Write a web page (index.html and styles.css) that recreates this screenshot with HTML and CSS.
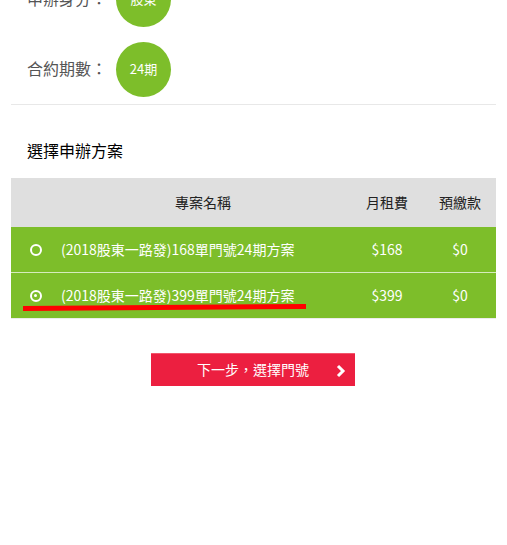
FILE: index.html
```html
<!DOCTYPE html>
<html lang="zh-Hant">
<head>
    <meta charset="UTF-8">
    <meta name="viewport" content="width=device-width, initial-scale=1.0">
    <title>選擇申辦方案</title>
    <link rel="stylesheet" href="styles.css">
</head>
<body>
    <div class="page">
        <!-- 申辦資訊 -->
        <div class="info">
            <div class="info-row">
                <span class="info-label">申辦身分：</span>
                <span class="badge">股東</span>
            </div>
            <div class="info-row">
                <span class="info-label">合約期數：</span>
                <span class="badge">24期</span>
            </div>
        </div>
        <hr class="divider">

        <h2 class="section-title">選擇申辦方案</h2>

        <div class="plans">
            <div class="plan-head">
                <span class="col-radio"></span>
                <span class="col-name">專案名稱</span>
                <span class="col-price">月租費</span>
                <span class="col-deposit">預繳款</span>
            </div>
            <label class="plan-row">
                <span class="col-radio"><span class="radio"></span></span>
                <span class="col-name name-left">(2018股東一路發)168單門號24期方案</span>
                <span class="col-price">$168</span>
                <span class="col-deposit">$0</span>
            </label>
            <label class="plan-row">
                <span class="col-radio"><span class="radio checked"></span></span>
                <span class="col-name name-left">(2018股東一路發)399單門號24期方案</span>
                <span class="col-price">$399</span>
                <span class="col-deposit">$0</span>
            </label>
            <!-- 標記線 -->
            <svg class="mark" width="290" height="10" viewBox="0 0 290 10">
                <polygon points="0,3 283,1 283,6 0,8" fill="#ff0000"/>
            </svg>
        </div>

        <div class="actions">
            <button class="next-btn" type="button">
                下一步，選擇門號
                <svg class="chev" width="12" height="14" viewBox="0 0 12 14">
                    <polyline points="3,2 8,7 3,12" fill="none" stroke="#fff" stroke-width="3"/>
                </svg>
            </button>
        </div>
    </div>
</body>
</html>
```

FILE: styles.css
```css
body {
    margin: 0;
    font-family: "Noto Sans CJK TC", "Liberation Sans", sans-serif;
    background: #fff;
    color: #555;
}
.page {
    padding: 0 11px;
}
.info {
    margin-top: -28px;
    padding-left: 16px;
}
.info-row {
    display: flex;
    align-items: center;
    height: 55px;
    margin-bottom: 15px;
}
.info-row:last-child {
    margin-bottom: 0;
}
.info-label {
    width: 89px;
    font-size: 16px;
    color: #555;
    padding-bottom: 3px;
}
.badge {
    width: 55px;
    height: 55px;
    border-radius: 50%;
    background: #7dbe2a;
    color: #fff;
    font-size: 13px;
    display: flex;
    align-items: center;
    justify-content: center;
    padding-bottom: 2px;
    box-sizing: border-box;
}
.divider {
    border: none;
    border-top: 1px solid #e8e8e8;
    margin: 7px 0 0;
}
.section-title {
    margin: 33px 0 16px 16px;
    font-size: 16px;
    line-height: 24px;
    font-weight: normal;
    color: #000;
}
.plans {
    position: relative;
    border-bottom: 1px solid #ececec;
}
.plan-head,
.plan-row {
    display: flex;
    align-items: center;
    font-size: 14px;
}
.plan-head {
    height: 49px;
    padding-bottom: 2px;
    box-sizing: border-box;
    background: #dfdfdf;
    color: #222;
}
.plan-row {
    height: 45px;
    padding-bottom: 2px;
    box-sizing: border-box;
    background: #7dbe2a;
    color: #fff;
    cursor: pointer;
}
.plan-row + .plan-row {
    height: 46px;
    border-top: 1px solid #d6ebbd;
}
.col-radio {
    width: 39px;
    display: flex;
    justify-content: center;
    padding-left: 10px;
    padding-top: 2px;
    box-sizing: border-box;
}
.col-name {
    width: 306px;
    text-align: center;
}
.name-left {
    text-align: left;
    padding-left: 11px;
    box-sizing: border-box;
}
.col-price {
    width: 62px;
    text-align: center;
}
.col-deposit {
    width: 78px;
    text-align: center;
    padding-left: 6px;
    box-sizing: border-box;
}
.radio {
    width: 12px;
    height: 12px;
    border: 2.5px solid #fff;
    border-radius: 50%;
    box-sizing: border-box;
    display: flex;
    align-items: center;
    justify-content: center;
}
.radio.checked::after {
    content: "";
    width: 3px;
    height: 3px;
    border-radius: 50%;
    background: #fff;
}
.mark {
    position: absolute;
    left: 12px;
    top: 125px;
}
.actions {
    display: flex;
    padding: 34px 0 0 140px;
}
.next-btn {
    position: relative;
    width: 204px;
    height: 33px;
    border: none;
    border-top: 1px solid #f2566c;
    background: #ec1f40;
    color: #fff;
    font-family: inherit;
    font-size: 14px;
    padding-bottom: 3px;
    box-shadow: 0 1px 0 #c8c8c8;
    cursor: pointer;
}
.chev {
    position: absolute;
    right: 8px;
    top: 10px;
}
```
